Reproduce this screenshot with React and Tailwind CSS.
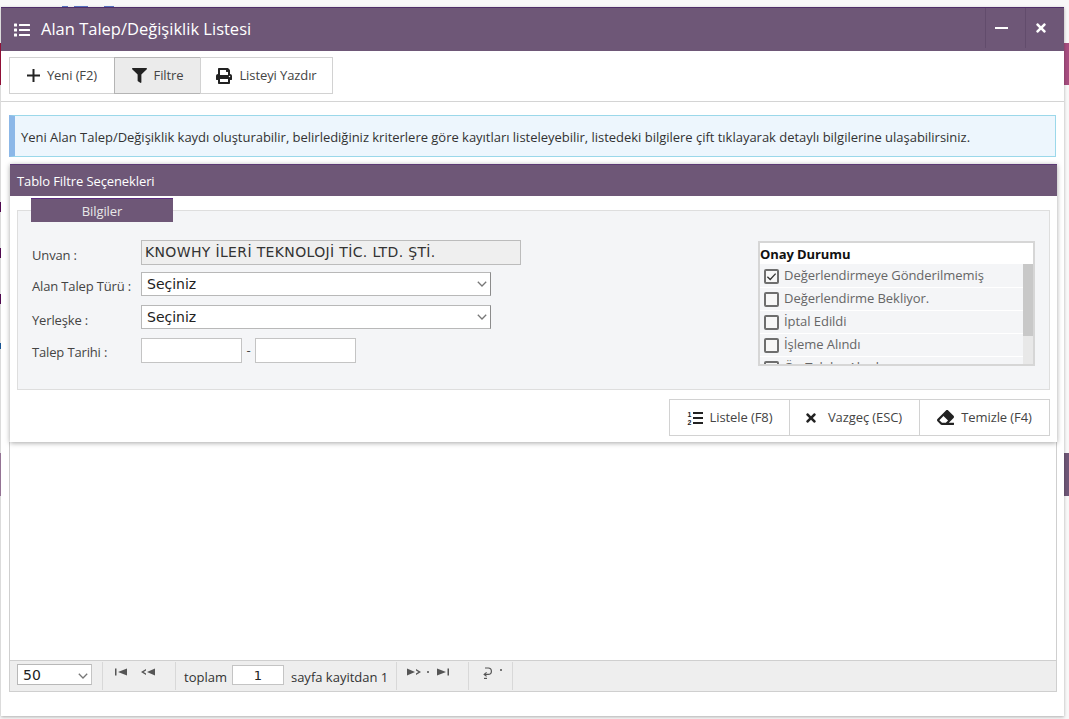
import React from "react";
import { FaList, FaFilter, FaPrint, FaTimes, FaEraser } from "react-icons/fa";

const ui = { fontFamily: '"Open Sans", "Noto Sans", sans-serif' };
const dj = { fontFamily: '"DejaVu Sans", sans-serif' };

function ToolBtn({ icon, label, active, className }) {
  return (
    <div className={`flex items-center justify-center gap-[7px] h-full text-[13px] tracking-[-0.1px] text-[#444] ${active ? "bg-[#ebebeb] border-[#b4b4b4]" : "bg-white border-[#d2d2d2]"} border ${className}`}>
      {icon}
      <span className="pt-[1px]">{label}</span>
    </div>
  );
}

function Check({ checked, label }) {
  return (
    <div className="flex items-center h-[23px] border-b border-white pl-[4px] gap-[5px] shrink-0">
      <span className="w-[15px] h-[15px] border-2 border-[#6e6e6e] rounded-[2px] bg-[#f7f7f7] flex items-center justify-center shrink-0">
        {checked && (
          <svg viewBox="0 0 12 12" className="w-[11px] h-[11px]" fill="none" stroke="#333" strokeWidth="1.4">
            <path d="M1.5 6.2 4.6 9.3 10.5 2.8" />
          </svg>
        )}
      </span>
      <span className="text-[13px] tracking-[-0.05px] text-[#666] whitespace-nowrap">{label}</span>
    </div>
  );
}

function Row({ label, children, className, labelClass = "pt-[6px]" }) {
  return (
    <div className={`flex items-center ${className}`}>
      <span className={`w-[109px] text-[13px] tracking-[-0.15px] text-[#444] whitespace-nowrap shrink-0 ${labelClass}`}>{label}</span>
      {children}
    </div>
  );
}

function Chevron({ className }) {
  return (
    <svg width="10" height="6" viewBox="0 0 10 6" fill="none" stroke="#777" strokeWidth="1.3" className={`absolute pointer-events-none ${className}`}>
      <path d="M.8.8 5 5 9.2.8" />
    </svg>
  );
}

function Select({ value, w, h, className }) {
  return (
    <div className="relative shrink-0" style={{ width: w, height: h }}>
      <select defaultValue={value} className={`block appearance-none w-full h-full bg-white border border-[#b8b8b8] border-r-[#8c8c8c] text-[14px] text-[#222] ${className}`} style={dj}>
        <option value={value}>{value}</option>
      </select>
      <Chevron className="right-[4px] top-[9px]" />
    </div>
  );
}

function PagerIcon({ d, w = 14 }) {
  return (
    <svg width={w} height="8" viewBox={`0 0 ${w} 8`} fill="#555" className="shrink-0">
      <path d={d} />
    </svg>
  );
}

function Sep() {
  return <div className="w-px self-stretch bg-[#d8d8d8] shrink-0" />;
}

function Sliver({ className }) {
  return <div className={`absolute ${className}`} />;
}

export default function App() {
  return (
    <div className="relative w-[1069px] h-[719px] overflow-hidden bg-[#f8f8f8] pt-[7px] pl-px" style={ui}>
      {/* slivers of the page behind the window */}
      <Sliver className="right-0 top-[43px] w-[5px] h-[42px] bg-[#a64d7f]" />
      <Sliver className="right-0 top-[453px] w-[5px] h-[43px] bg-[#6e5777]" />
      <Sliver className="left-0 top-[43px] w-px h-[42px] bg-[#a3123f]" />
      <Sliver className="left-0 top-[453px] w-px h-[43px] bg-[#a882a8]" />
      <Sliver className="left-0 top-[202px] w-px h-[10px] bg-[#5a0a5a]" />
      <Sliver className="left-0 top-[248px] w-px h-[10px] bg-[#5a0a5a]" />
      <Sliver className="left-0 top-[294px] w-px h-[10px] bg-[#5a0a5a]" />
      <Sliver className="left-0 top-[343px] w-px h-[6px] bg-[#1a5fa8]" />
      <Sliver className="left-[62px] top-[6px] w-[6px] h-px bg-[#5a78c8]" />
      <Sliver className="left-[74px] top-[6px] w-[14px] h-px bg-[#5a78c8]" />
      <Sliver className="left-[104px] top-[6px] w-[10px] h-px bg-[#5a78c8]" />

      <div className="relative w-[1063px] h-[709px] bg-white flex flex-col shadow-[0_1px_3px_rgba(0,0,0,0.3)]">
        {/* title bar */}
        <div className="h-[44px] shrink-0 bg-[#6e5777] border-t border-[#4f2e68] flex items-center text-white">
          <FaList className="ml-[13px] w-[16px] h-[16px]" />
          <span className="ml-[11px] text-[16.5px]">Alan Talep/Değişiklik Listesi</span>
          <div className="ml-auto flex self-stretch pb-[3px]">
            <div className="w-[40px] border-l border-[#624c6c] flex items-center justify-center pr-[8px]">
              <span className="w-[13px] h-[2px] bg-white" />
            </div>
            <div className="w-[39px] border-l border-[#624c6c] flex items-center justify-center pr-[8px]">
              <FaTimes className="w-[14px] h-[14px]" />
            </div>
          </div>
        </div>

        {/* toolbar */}
        <div className="h-[51px] shrink-0 border-b border-[#d4d4d4] pt-[6px] pl-[8px]">
          <div className="flex h-[37px] w-[324px]">
            <ToolBtn
              className="w-[106px]"
              icon={
                <svg width="13" height="13" viewBox="0 0 13 13" fill="#222">
                  <path d="M5.5 0h2v5.5H13v2H7.5V13h-2V7.5H0v-2h5.5z" />
                </svg>
              }
              label="Yeni (F2)"
            />
            <ToolBtn className="w-[87px] -ml-px" active icon={<FaFilter className="w-[15px] h-[15px] text-[#222]" />} label="Filtre" />
            <ToolBtn className="w-[133px] -ml-px" icon={<FaPrint className="w-[16px] h-[16px] text-[#222]" />} label="Listeyi Yazdır" />
          </div>
        </div>

        {/* info */}
        <div className="mt-[13px] ml-[8px] w-[1047px] h-[42px] shrink-0 bg-[#edf6fd] border border-[#9bd8ea] border-l-[6px] border-l-[#8cb8e8] flex items-center pl-[6px] pt-[3px] text-[13px] tracking-[-0.02px] text-[#333] whitespace-nowrap">
          Yeni Alan Talep/Değişiklik kaydı oluşturabilir, belirlediğiniz kriterlere göre kayıtları listeleyebilir, listedeki bilgilere çift tıklayarak detaylı bilgilerine ulaşabilirsiniz.
        </div>

        {/* filter panel */}
        <div className="relative z-10 mt-[7px] ml-[9px] w-[1047px] h-[278px] shrink-0 bg-white shadow-[0_1px_5px_rgba(0,0,0,0.35)]">
          <div className="h-[32px] bg-[#6e5777] border-t border-[#5c3a74] flex items-center pl-[7px] pt-[2px] text-[13px] font-medium tracking-[-0.1px] text-white">
            Tablo Filtre Seçenekleri
          </div>

          <div className="relative mt-[14px] ml-[7px] w-[1033px] h-[180px] bg-[#f4f5f7] border border-[#dedede] flex justify-between">
            <div className="absolute -top-[13px] left-[13px] w-[142px] h-[24px] bg-[#6e5777] border-t border-[#5c2a80] flex items-center justify-center pt-[3px] text-[13px] font-medium tracking-[-0.1px] text-[#e8e8e8]">
              Bilgiler
            </div>

            <div className="pl-[14px] pt-[29px] flex flex-col">
              <Row label="Unvan :" className="h-[25px]">
                <div className="w-[380px] h-[25px] bg-[#efefef] border border-[#bcbcbc] pl-[3px] flex items-center text-[14px] tracking-[0.35px] text-[#333] whitespace-nowrap" style={dj}>
                  KNOWHY İLERİ TEKNOLOJİ TİC. LTD. ŞTİ.
                </div>
              </Row>
              <Row label="Alan Talep Türü :" className="mt-[7px] h-[24px]">
                <Select value="Seçiniz" w={350} h={24} className="pl-[5px]" />
              </Row>
              <Row label="Yerleşke :" labelClass="pt-[7px]" className="mt-[9px] h-[24px]">
                <Select value="Seçiniz" w={350} h={24} className="pl-[5px]" />
              </Row>
              <Row label="Talep Tarihi :" labelClass="pt-[4px]" className="mt-[9px] h-[25px]">
                <input className="w-[101px] h-[25px] bg-white border border-[#c4c4c4]" />
                <span className="w-[13px] text-center text-[13px] text-[#444]">-</span>
                <input className="w-[101px] h-[25px] bg-white border border-[#c4c4c4]" />
              </Row>
            </div>

            <div className="mt-[30px] mr-[14px] w-[277px] h-[125px] border-2 border-[#d6d6d6] flex flex-col overflow-hidden">
              <div className="h-[21px] shrink-0 bg-white flex items-center pt-[2px] text-[13px] font-bold tracking-[-0.1px] text-[#111]">
                Onay Durumu
              </div>
              <div className="relative flex-1 overflow-hidden pr-[10px] pt-[1px]">
                <Check checked label="Değerlendirmeye Gönderilmemiş" />
                <Check label="Değerlendirme Bekliyor." />
                <Check label="İptal Edildi" />
                <Check label="İşleme Alındı" />
                <Check label="Ön Talebe Alındı" />
                <div className="absolute top-0 right-0 bottom-0 w-[10px] bg-[#e8e8e8]">
                  <div className="h-[72px] bg-[#c8c8c8]" />
                </div>
              </div>
            </div>
          </div>

          <div className="mt-[9px] ml-[659px] flex h-[37px] w-[381px]">
            <ToolBtn
              className="w-[121px]"
              icon={
                <svg width="16" height="14" viewBox="0 0 16 14" fill="#222">
                  <text x="0.5" y="6" fontSize="7" fontWeight="700" fontFamily="'Liberation Sans', sans-serif">1</text>
                  <text x="0.5" y="13.5" fontSize="7" fontWeight="700" fontFamily="'Liberation Sans', sans-serif">2</text>
                  <rect x="6" y="1" width="10" height="2" />
                  <rect x="6" y="6" width="10" height="2" />
                  <rect x="6" y="11" width="10" height="2" />
                </svg>
              }
              label="Listele (F8)"
            />
            <ToolBtn className="w-[131px] -ml-px pr-[3px]" icon={<FaTimes className="w-[14px] h-[14px] text-[#222] mr-[3px]" />} label="Vazgeç (ESC)" />
            <ToolBtn className="w-[131px] -ml-px" icon={<FaEraser className="w-[17px] h-[17px] text-[#222]" />} label="Temizle (F4)" />
          </div>
        </div>

        {/* grid body */}
        <div className="ml-[8px] w-[1048px] flex-1 min-h-0 border-x border-[#cfcfcf]" />

        {/* pager */}
        <div className="ml-[8px] mb-[24px] w-[1048px] h-[32px] shrink-0 bg-[#eeeeee] border border-[#cfcfcf] flex items-stretch py-[1px] text-[13px] text-[#333]">
          <div className="w-[92px] flex items-start pt-[2px] pl-[7px] shrink-0">
            <Select value="50" w={75} h={21} className="pl-[5px] border-r-[#c4c4c4]!" />
          </div>
          <Sep />
          <div className="w-[72px] flex items-start pt-[6px] pl-[12px] gap-[13px] shrink-0">
            <PagerIcon w={13} d="M0 .5h1.5v7H0zM3 4l9-3.5v7z" />
            <PagerIcon w={15} d="M0 4l5-3v1.4L2.6 4 5 5.6V7zM6 4l8-3.5v7z" />
          </div>
          <Sep />
          <div className="w-[220px] flex items-center pl-[8px] pt-[3px] shrink-0 whitespace-nowrap">
            <span>toplam</span>
            <input readOnly value="1" className="ml-[5px] w-[52px] h-[20px] bg-white border border-[#c4c4c4] text-center text-[13px] text-[#222] mb-[5px]" style={dj} />
            <span className="ml-[7px]">sayfa kayitdan 1</span>
          </div>
          <Sep />
          <div className="w-[71px] flex items-start pt-[6px] pl-[10px] shrink-0">
            <PagerIcon w={14} d="M0 .5 8 4 0 7.5zM9 1l5 3-5 3V5.6L11.4 4 9 2.4z" />
            <span className="ml-[6px] mr-[8px] w-[2px] h-[2px] mt-[3px] bg-[#777] shrink-0" />
            <PagerIcon w={12} d="M0 .5 9 4 0 7.5zM10.5 .5H12v7h-1.5z" />
          </div>
          <Sep />
          <div className="w-[43px] flex items-start pt-[5px] pl-[13px] gap-[8px] shrink-0">
            <svg width="10" height="12" viewBox="0 0 10 12" fill="none" stroke="#555" strokeWidth="1.2" className="shrink-0">
              <path d="M3 1h3.2a3 3 0 0 1 0 6.4H2.5" />
              <path d="M4.6 5.4 2.2 7.4l2.4 2" />
              <path d="M2 11.4h3" />
            </svg>
            <span className="w-[2px] h-[2px] mt-[2px] bg-[#777] shrink-0" />
          </div>
          <Sep />
        </div>
      </div>
    </div>
  );
}
